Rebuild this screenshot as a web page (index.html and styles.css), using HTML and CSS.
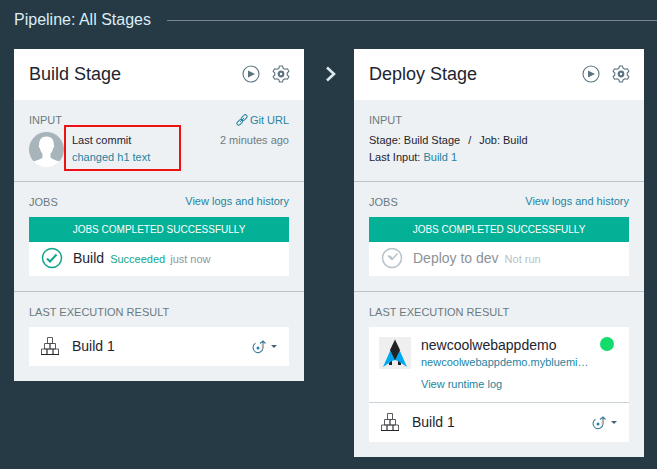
FILE: index.html
```html
<!DOCTYPE html>
<html lang="en">
<head>
<meta charset="utf-8">
<title>Pipeline: All Stages</title>
<link rel="stylesheet" href="styles.css">
</head>
<body>
<svg class="sprite" aria-hidden="true">
  <symbol id="play" viewBox="0 0 18 18"><circle cx="9" cy="9" r="8" fill="none" stroke="currentColor" stroke-width="1.1"/><path d="M6 5.500 13 9l-7 3.500z" fill="currentColor"/></symbol>
  <symbol id="gear" viewBox="0 0 18 18"><path d="M7.600 1H10.400L11.200 3.300 13 4.300 15.400 3.800 16.900 6.300 15.200 8V10L16.900 11.700 15.400 14.200 13 13.700 11.200 14.700 10.400 17H7.600L6.800 14.700 5 13.700 2.600 14.200 1.100 11.700 2.800 10V8L1.100 6.300 2.600 3.800 5 4.300 6.800 3.300Z" fill="none" stroke="currentColor" stroke-width="1.100" stroke-linejoin="round"/><circle cx="9" cy="9" r="2.300" fill="none" stroke="currentColor" stroke-width="2.200"/></symbol>
  <symbol id="blocks" viewBox="0 0 20 20"><path d="M7.500 1.500h5v6h-5zM4.500 7.500h5.500v5.500H4.500zM10 7.500h5.500v5.500H10zM1.500 13h5.500v5.500H1.500zM7 13h6v5.500H7zM13 13h5.500v5.500H13z" fill="none" stroke="#4c4a50" stroke-width=".9"/><path d="M1 18.500h18" stroke="#22242b"/></symbol>
  <symbol id="deploy" viewBox="0 0 14 14"><path d="M3.500 3.300A5 5 0 1 0 11 8V1.500M8 3.500l3-2.500 2.500 2.500" fill="none" stroke="#3d7c98" stroke-width="1.100"/><circle cx="6" cy="8" r="1.500" fill="#1787b5"/><path d="M10.200 4v5" stroke="#e6a58d" stroke-width=".8"/></symbol>
</svg>
<header class="page-head"><h1>Pipeline: All Stages</h1></header>
<main class="pipeline">
  <article class="card">
    <header class="card-head">
      <h2>Build Stage</h2>
      <button class="tool" aria-label="Run stage"><svg><use href="#play"/></svg></button>
      <button class="tool" aria-label="Configure stage"><svg><use href="#gear"/></svg></button>
    </header>
    <section class="section input">
      <div class="section-head">
        <h3>INPUT</h3>
        <a href="#git" class="git"><svg viewBox="0 0 12 12"><g fill="none" stroke="currentColor"><rect x="5" y="1.800" width="6.500" height="3.600" rx="1.800" transform="rotate(-45 8.200 3.600)"/><rect x=".5" y="6.600" width="6.500" height="3.600" rx="1.800" transform="rotate(-45 3.700 8.400)"/><path d="m4 8 4-4"/></g></svg>Git URL</a>
      </div>
      <div class="media">
        <svg class="avatar" viewBox="0 0 35 35"><circle cx="17.500" cy="17.500" r="17.500" fill="#a7b5bb"/><path d="M17.500 4.500c-5 0-7.500 3-7.300 8.500-.8.600-.3 3 .8 3.500.4 2.500 1.300 4 2.500 5.300v3.400c-1.500 2.400-6 3-9 4.300A17.500 17.500 0 0 0 30.500 29.500c-3-1.300-7.500-1.900-9-4.300v-3.400c1.200-1.300 2.100-2.800 2.500-5.300 1.100-.5 1.600-2.900.8-3.500.2-5.500-2.300-8.500-7.300-8.500z" fill="#fff"/></svg>
        <div class="commit">
          <div>Last commit</div>
          <a href="#commit">changed h1 text</a>
        </div>
        <time>2 minutes ago</time>
      </div>
    </section>
    <section class="section">
      <div class="section-head"><h3>JOBS</h3><a href="#logs">View logs and history</a></div>
      <div class="banner">JOBS COMPLETED SUCCESSFULLY</div>
      <div class="job">
        <svg class="status ok" viewBox="0 0 22 22"><circle cx="11" cy="11" r="9.500" fill="none" stroke="currentColor" stroke-width="1.500"/><path d="m6 11.500 3 3 6.500-7" fill="none" stroke="currentColor" stroke-width="2"/></svg>
        <span class="name">Build</span><span class="state ok">Succeeded</span><span class="when">just now</span>
      </div>
    </section>
    <section class="section">
      <div class="section-head"><h3>LAST EXECUTION RESULT</h3></div>
      <div class="result">
        <svg class="blocks"><use href="#blocks"/></svg><span class="name">Build 1</span>
        <button class="menu" aria-label="Deploy options"><svg><use href="#deploy"/></svg><i></i></button>
      </div>
    </section>
  </article>
  <svg class="next" viewBox="0 0 12 16"><path d="m2 1.500 7 6.500-7 6.500" fill="none" stroke="currentColor" stroke-width="2.600"/></svg>
  <article class="card">
    <header class="card-head">
      <h2>Deploy Stage</h2>
      <button class="tool" aria-label="Run stage"><svg><use href="#play"/></svg></button>
      <button class="tool" aria-label="Configure stage"><svg><use href="#gear"/></svg></button>
    </header>
    <section class="section input">
      <div class="section-head"><h3>INPUT</h3></div>
      <div class="source">
        <div class="path"><span>Stage: Build Stage</span><span>/</span><span>Job: Build</span></div>
        <div>Last Input: <a href="#build">Build 1</a></div>
      </div>
    </section>
    <section class="section">
      <div class="section-head"><h3>JOBS</h3><a href="#logs">View logs and history</a></div>
      <div class="banner">JOBS COMPLETED SUCCESSFULLY</div>
      <div class="job idle">
        <svg class="status" viewBox="0 0 22 22"><circle cx="11" cy="11" r="9.500" fill="none" stroke="currentColor" stroke-width="1.500"/><path d="m7 8.500 4 4 5.500-6" fill="none" stroke="currentColor" stroke-width="1.500"/><path d="m8.500 9 2.500 3" stroke="currentColor" stroke-width="2"/></svg>
        <span class="name">Deploy to dev</span><span class="state">Not run</span>
      </div>
    </section>
    <section class="section">
      <div class="section-head"><h3>LAST EXECUTION RESULT</h3></div>
      <div class="app">
        <svg class="logo" viewBox="0 0 32 32"><rect width="32" height="32" rx="1" fill="#efefef"/><path d="M10 21h3v7h-3zM19 21h3v7h-3z" fill="#222"/><path d="M11.500 13 16 23l4.500-10L28 30l-9-6-3-1-3 1-9 6z" fill="#00a9ef"/><path d="m16 2.500 5 10.500-5 10.500L11 13z" fill="#222"/></svg>
        <div class="app-text">
          <div class="name">newcoolwebappdemo</div>
          <a href="#app">newcoolwebappdemo.mybluemi…</a>
          <a href="#runtime" class="runtime">View runtime log</a>
        </div>
        <span class="dot"></span>
      </div>
      <div class="result">
        <svg class="blocks"><use href="#blocks"/></svg><span class="name">Build 1</span>
        <button class="menu" aria-label="Deploy options"><svg><use href="#deploy"/></svg><i></i></button>
      </div>
    </section>
  </article>
</main>
</body>
</html>
```
FILE: styles.css
```css
*, *::before, *::after { box-sizing: border-box; }
body {
  margin: 0;
  background: #263a45;
  color: #1d2430;
  font: 11px/17px "Liberation Sans", Arial, sans-serif;
}
h1, h2, h3 { margin: 0; font-weight: 400; }
a { color: #2584a0; text-decoration: none; }
svg { display: block; flex: none; }
button { border: 0; padding: 0; background: none; color: inherit; }
.sprite { position: absolute; width: 0; height: 0; }

.page-head { display: flex; align-items: center; gap: 16px; padding: 10px 0 19px 14px; }
.page-head h1 { color: #dcedf5; font-size: 16px; line-height: 20px; }
.page-head::after { content: ""; flex: 1; height: 1px; background: #78858d; }

.pipeline {
  display: grid;
  grid-template-columns: minmax(0, 1fr) 50px minmax(0, 1fr);
  align-items: start;
  padding: 0 13px 12px 14px;
}
.next { width: 12px; height: 16px; margin: 17px 0 0 21px; color: #dce9ee; }
.card { background: #edf1f4; }
.card-head { display: flex; align-items: center; gap: 12px; height: 51px; padding: 0 14px 2px 15px; background: #fff; }
.card-head h2 { flex: 1; font-size: 18px; line-height: 22px; }
.tool, .tool svg { width: 18px; height: 18px; color: #5c7480; }

.section { padding: 12px 15px 15px; }
.section + .section { border-top: 1px solid #b9c5ca; }
.section-head { display: flex; justify-content: space-between; height: 16px; margin-bottom: 7px; line-height: 16px; }
.section-head h3 { color: #6b7a80; font-size: 11px; line-height: 17px; }
.section-head a { line-height: 15px; }
.input { padding-bottom: 14px; }
.input .section-head { margin-bottom: 4px; }
.git { display: flex; align-items: center; gap: 2px; }
.git svg { width: 12px; height: 12px; }

.media { display: flex; gap: 8px; }
.avatar { width: 35px; height: 35px; }
.commit { position: relative; }
.commit::after {
  content: "";
  position: absolute;
  top: -7px;
  left: -8px;
  width: 117px;
  height: 46px;
  border: 2px solid #ee1111;
}
.media time { margin-left: auto; color: #6f7b82; }
.source { min-height: 35px; }
.path { display: flex; gap: 8px; }

.banner { background: #04b197; color: #fff; font-size: 10px; line-height: 25px; text-align: center; }
.job { display: flex; align-items: center; height: 34px; padding: 0 12px 2px; background: #fff; }
.status { width: 22px; height: 22px; margin-right: 10px; }
.name { font-size: 14px; }
.state { margin-left: 6px; padding-top: 2px; }
.when { margin-left: 5px; padding-top: 2px; color: #8e979d; }
.ok { color: #12a58e; }
.idle { color: #b5c2c7; }
.idle .name { color: #8b9297; }

.result { display: flex; align-items: center; height: 39px; padding: 0 12px 0 11px; background: #fff; }
.blocks { width: 20px; height: 20px; margin: 0 12px 2px 0; }
.menu { display: flex; align-items: center; gap: 5px; margin-left: auto; }
.menu svg { width: 14px; height: 14px; }
.menu i { border: 3px solid transparent; border-top-color: #47616f; border-bottom: 0; }

.app { display: flex; padding: 10px 15px 9px 10px; background: #fff; border-bottom: 1px solid #c9d3d6; }
.logo { width: 32px; height: 32px; margin-right: 10px; }
.app-text { flex: 1; min-width: 0; white-space: nowrap; }
.app-text a { display: block; }
.app-text .runtime { margin-top: 5px; }
.dot { flex: none; width: 14px; height: 14px; border-radius: 50%; background: #14dc6a; }
```
